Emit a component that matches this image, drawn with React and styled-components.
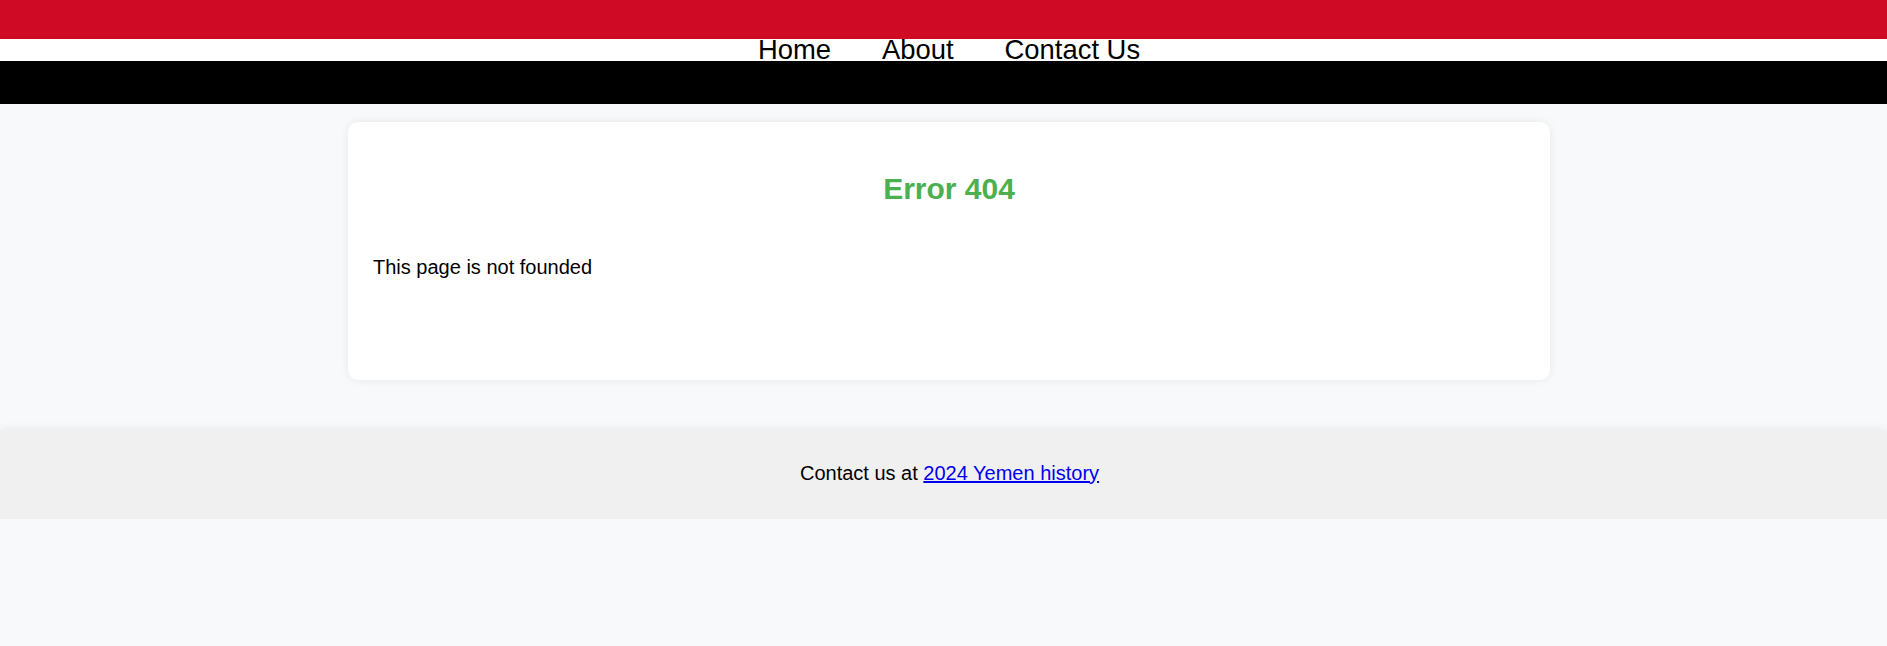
import styled, { createGlobalStyle } from "styled-components";

const GlobalStyle = createGlobalStyle`
  body {
    margin: 0;
    background: #f8f9fa;
    font-family: "Liberation Sans", Arial, sans-serif;
    color: #000;
  }
`;

const Header = styled.header`
  display: flex;
  flex-direction: column;
`;

const Stripe = styled.div`
  height: ${(p) => p.h}px;
  background: ${(p) => p.cor};
`;

const Nav = styled.nav`
  height: 22px;
  background: #fff;
  display: flex;
  justify-content: center;
  gap: 51px;
  padding-left: 11px;
`;

const NavLink = styled.a`
  font-size: 27.4px;
  line-height: 22px;
  color: #000;
  text-decoration: none;
`;

const Main = styled.main`
  padding: 18px 0 50px 11px;
`;

const Card = styled.div`
  width: 1202px;
  box-sizing: border-box;
  margin: 0 auto;
  padding: 50px 25px 101px;
  background: #fff;
  border-radius: 10px;
  box-shadow: 0 0 10px rgba(0, 0, 0, 0.07);
`;

const Titulo = styled.h2`
  margin: 0 0 49.5px;
  font-size: 30px;
  font-weight: bold;
  text-align: center;
  color: #4caf50;
`;

const Texto = styled.p`
  margin: 0;
  font-size: 20px;
`;

const Footer = styled.footer`
  background: #f0f0f0;
  padding: 32px 0 34px 12px;
  text-align: center;
  font-size: 20px;
  box-shadow: 0 0 10px rgba(0, 0, 0, 0.08);
`;

const Link = styled.a`
  color: #0000ee;
  text-decoration: underline;
`;

function App() {
  return (
    <>
      <GlobalStyle />
      <Header>
        <Stripe h={39} cor="#ce0a24" />
        <Nav>
          <NavLink href="#">Home</NavLink>
          <NavLink href="#">About</NavLink>
          <NavLink href="#">Contact Us</NavLink>
        </Nav>
        <Stripe h={43} cor="#000" />
      </Header>
      <Main>
        <Card>
          <Titulo>Error 404</Titulo>
          <Texto>This page is not founded</Texto>
        </Card>
      </Main>
      <Footer>
        Contact us at <Link href="#">2024 Yemen history</Link>
      </Footer>
    </>
  );
}

export default App;
